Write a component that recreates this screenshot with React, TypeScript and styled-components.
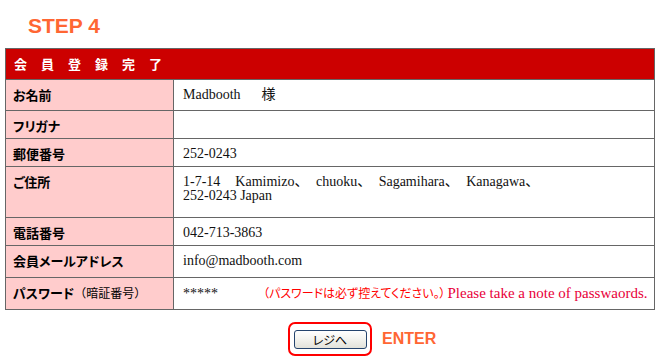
import React from "react";
import styled, { createGlobalStyle } from "styled-components";

const GlobalStyle = createGlobalStyle`
  html, body { margin: 0; padding: 0; background: #ffffff; }
  body { font-family: "Liberation Sans", Arial, sans-serif; }
`;

const Page = styled.div`
  width: 660px;
  height: 362px;
  box-sizing: border-box;
  padding: 14px 0 0 5px;
  overflow: hidden;
`;

const StepTitle = styled.h2`
  margin: 0 0 10px 23px;
  font: bold 21px/24px "Liberation Sans", Arial, sans-serif;
  color: #ff6633;
`;

const Sheet = styled.div`
  width: 650px;
  box-sizing: border-box;
  border: 1px solid #666666;
`;

const Caption = styled.div`
  height: 30px;
  display: flex;
  align-items: center;
  padding-left: 8px;
  background: #cc0000;
  border-bottom: 1px solid #666666;
  color: #ffffff;
  font: bold 13px/16px "Noto Sans CJK JP", sans-serif;
  letter-spacing: 14px;
`;

const Row = styled.div<{ $h: number }>`
  display: grid;
  grid-template-columns: 168px 1fr;
  min-height: ${(p) => p.$h}px;
  border-bottom: 1px solid #666666;
  &:last-child {
    border-bottom: none;
  }
`;

const Label = styled.div`
  background: #ffcccc;
  border-right: 1px solid #666666;
  padding: 7px 0 0 7px;
  color: #000000;
  font: bold 13px/16px "Noto Sans CJK JP", sans-serif;
  font-feature-settings: "palt";
  white-space: nowrap;
`;

const LabelNote = styled.span`
  font-weight: normal;
  font-size: 12px;
  font-feature-settings: normal;
`;

const Value = styled.div`
  padding: 8px 0 0 9px;
  color: #111111;
  font: 14px/14px "Liberation Serif", "Noto Sans CJK JP", serif;
  white-space: nowrap;
`;

const Spaced = styled.span`
  word-spacing: 4px;
`;

const Warning = styled.span`
  margin-left: 45px;
  color: #ff0000;
  font: 12px/14px "Noto Sans CJK JP", sans-serif;
  font-feature-settings: "palt";
`;

const WarningEn = styled.span`
  margin-left: 2px;
  color: #e8003a;
  font: 15px/14px "Liberation Serif", serif;
`;

const Actions = styled.div`
  width: 650px;
  margin-top: 12px;
  display: grid;
  grid-template-columns: 1fr auto 1fr;
  align-items: center;
`;

const Frame = styled.div`
  grid-column: 2;
  width: 84px;
  height: 34px;
  box-sizing: border-box;
  border: 2px solid #ff0000;
  border-radius: 7px;
  display: flex;
  align-items: center;
  justify-content: center;
`;

const Button = styled.button`
  width: 73px;
  height: 19px;
  box-sizing: border-box;
  padding: 0;
  border: 1px solid #24446e;
  border-radius: 3px;
  background: linear-gradient(#ffffff 0%, #f4f4f0 45%, #e2e2da 100%);
  color: #000000;
  font: 12px/17px "Noto Sans CJK JP", sans-serif;
  font-feature-settings: "palt";
  cursor: pointer;
`;

const Enter = styled.span`
  justify-self: start;
  margin-left: 10px;
  color: #ff6633;
  font: bold 16px/18px "Liberation Sans", Arial, sans-serif;
`;

const rows: { label: React.ReactNode; value: React.ReactNode; h: number }[] = [
  { label: "お名前", value: "Madbooth\u3000\u00a0\u00a0様", h: 30 },
  { label: "フリガナ", value: "", h: 27 },
  { label: "郵便番号", value: "252-0243", h: 27 },
  {
    label: "ご住所",
    value: (
      <>
        <Spaced>1-7-14{"\u00a0"} Kamimizo、 chuoku、 Sagamihara、 Kanagawa、</Spaced>
        <br />
        252-0243 Japan
      </>
    ),
    h: 50,
  },
  { label: "電話番号", value: "042-713-3863", h: 27 },
  { label: "会員メールアドレス", value: "info@madbooth.com", h: 31 },
  {
    label: (
      <>
        パスワード<LabelNote>（暗証番号）</LabelNote>
      </>
    ),
    value: (
      <>
        *****
        <Warning>（パスワードは必ず控えてください。）</Warning>
        <WarningEn>Please take a note of passwaords.</WarningEn>
      </>
    ),
    h: 31,
  },
];

export default function App() {
  return (
    <>
      <GlobalStyle />
      <Page>
        <StepTitle>STEP 4</StepTitle>
        <Sheet>
          <Caption>会員登録完了</Caption>
          {rows.map((r, i) => (
            <Row key={i} $h={r.h}>
              <Label>{r.label}</Label>
              <Value>{r.value}</Value>
            </Row>
          ))}
        </Sheet>
        <Actions>
          <Frame>
            <Button type="button">レジへ</Button>
          </Frame>
          <Enter>ENTER</Enter>
        </Actions>
      </Page>
    </>
  );
}
